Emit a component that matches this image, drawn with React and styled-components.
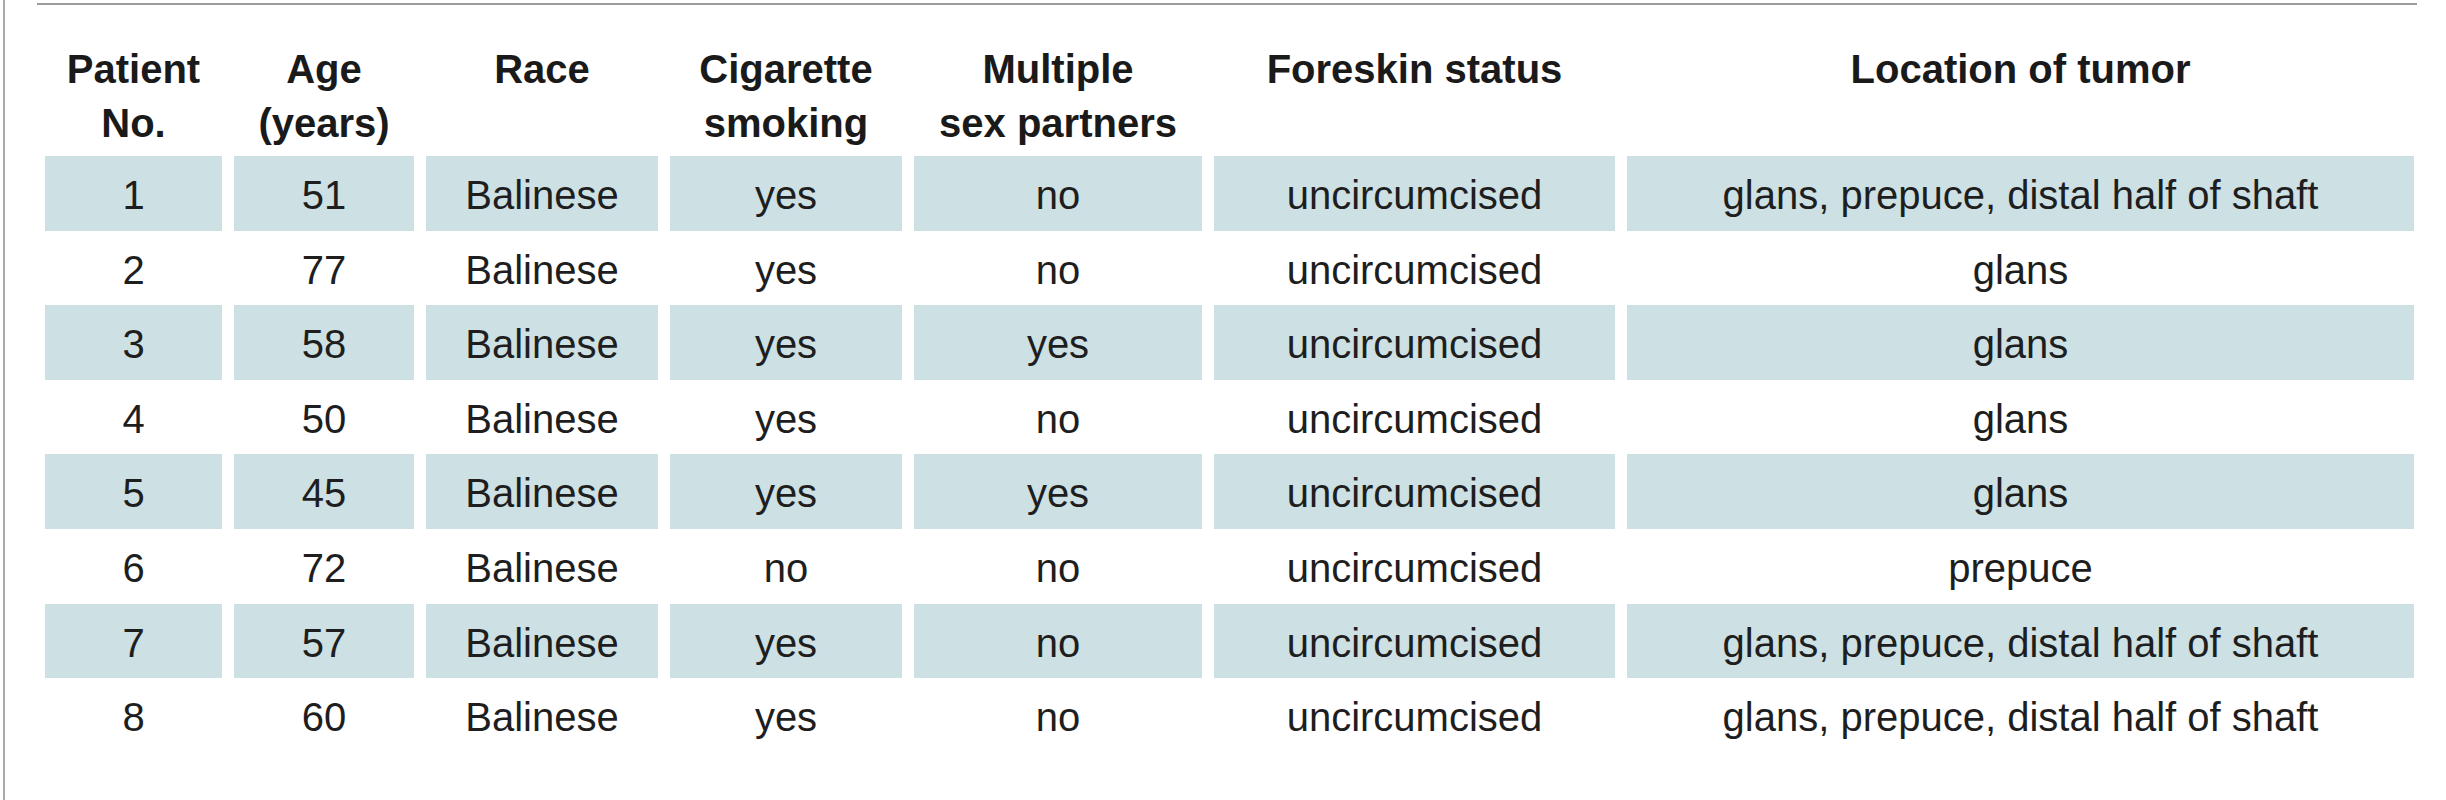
import React from 'react'
import styled, { createGlobalStyle } from 'styled-components'

const GlobalStyle = createGlobalStyle`
  html, body {
    margin: 0;
    padding: 0;
    background: #ffffff;
  }
  body {
    font-family: 'Liberation Sans', Arial, sans-serif;
    color: #1e1e1e;
  }
`

const COLUMNS = '177px 180px 232px 232px 288px 401px 787px'

const Frame = styled.div`
  margin-left: 3px;
  height: 800px;
  border-left: 2px solid #a9a9a9;
  box-sizing: border-box;
  overflow: hidden;
`

const TopRule = styled.div`
  margin: 3px 0 0 32px;
  width: 2380px;
  height: 2px;
  background: #9c9c9c;
`

const Table = styled.div`
  margin: 37px 0 0 40px;
  display: flex;
  flex-direction: column;
`

const Row = styled.div`
  display: grid;
  grid-template-columns: ${COLUMNS};
  column-gap: 12px;
  height: ${({ $header }) => ($header ? '114px' : '74.6px')};
`

const HeadCell = styled.div`
  font-family: 'Liberation Sans', Arial, sans-serif;
  font-weight: 700;
  font-size: 40px;
  line-height: 54px;
  color: #1a1a1a;
  text-align: center;
  white-space: pre-line;
`

const Cell = styled.div`
  box-sizing: border-box;
  padding-top: 4px;
  font-family: 'Liberation Sans', Arial, sans-serif;
  font-size: 40px;
  line-height: 70.6px;
  text-align: center;
  white-space: nowrap;
  color: #1e1e1e;
  background: ${({ $shaded }) => ($shaded ? '#cde0e3' : 'transparent')};
`

const headers = [
  'Patient\nNo.',
  'Age\n(years)',
  'Race',
  'Cigarette\nsmoking',
  'Multiple\nsex partners',
  'Foreskin status',
  'Location of tumor',
]

const full = 'glans, prepuce, distal half of shaft'

const patients = [
  ['1', '51', 'Balinese', 'yes', 'no', 'uncircumcised', full],
  ['2', '77', 'Balinese', 'yes', 'no', 'uncircumcised', 'glans'],
  ['3', '58', 'Balinese', 'yes', 'yes', 'uncircumcised', 'glans'],
  ['4', '50', 'Balinese', 'yes', 'no', 'uncircumcised', 'glans'],
  ['5', '45', 'Balinese', 'yes', 'yes', 'uncircumcised', 'glans'],
  ['6', '72', 'Balinese', 'no', 'no', 'uncircumcised', 'prepuce'],
  ['7', '57', 'Balinese', 'yes', 'no', 'uncircumcised', full],
  ['8', '60', 'Balinese', 'yes', 'no', 'uncircumcised', full],
]

function App() {
  return (
    <>
      <GlobalStyle />
      <Frame>
        <TopRule />
        <Table>
          <Row $header>
            {headers.map((h) => (
              <HeadCell key={h}>{h}</HeadCell>
            ))}
          </Row>
          {patients.map((row, i) => (
            <Row key={row[0]}>
              {row.map((value, j) => (
                <Cell key={j} $shaded={i % 2 === 0}>
                  {value}
                </Cell>
              ))}
            </Row>
          ))}
        </Table>
      </Frame>
    </>
  )
}

export default App
